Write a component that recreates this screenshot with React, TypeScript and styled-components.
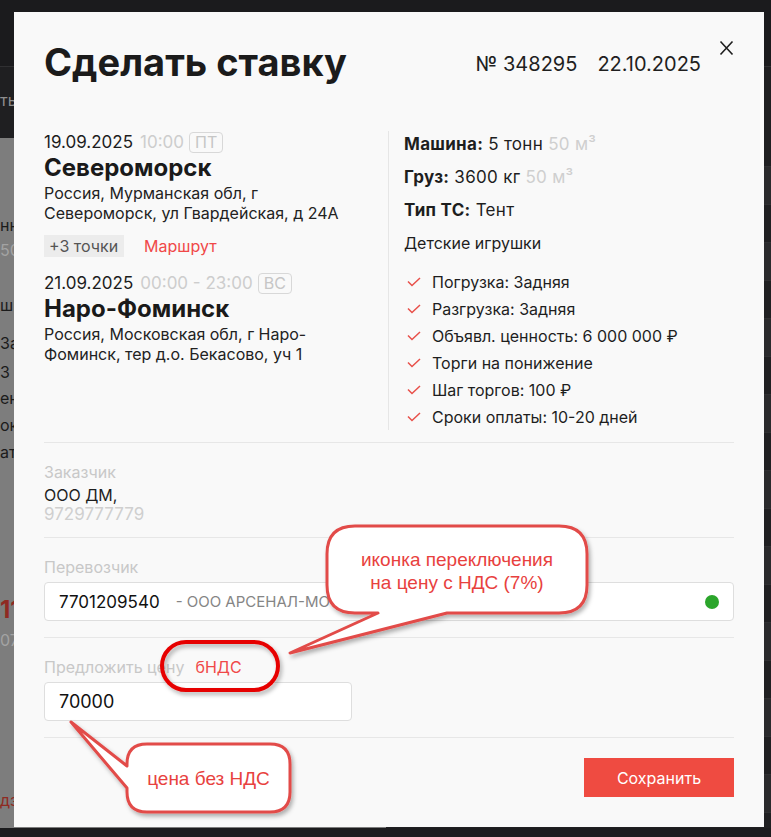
import React from 'react';
import styled, { createGlobalStyle } from 'styled-components';

const GlobalStyle = createGlobalStyle`
  html, body { margin: 0; padding: 0; }
  body {
    background: #1c1c1e;
    font-family: Inter, "Noto Sans", sans-serif;
    color: #1d1d1d;
  }
  *, *::before, *::after { box-sizing: border-box; }
`;

/* ---------- page under the overlay ---------- */

const Page = styled.div`
  width: 771px;
  height: 837px;
  display: flex;
  flex-direction: column;
  overflow: hidden;
`;

const NavBar = styled.div`
  flex-shrink: 0;
  height: 67px;
  background: #1b1b1d;
  border-bottom: 1px solid #303032;
`;

const SubBar = styled.div`
  flex-shrink: 0;
  height: 71px;
  background: #1f1f21;
  padding-top: 23px;
  font-size: 16px;
  line-height: 20px;
  color: #8e8e8e;
  white-space: nowrap;
`;

const PageBody = styled.div`
  flex: 1;
  min-height: 0;
  overflow: hidden;
  display: grid;
  grid-template-columns: 1fr 1fr;
`;

const LeftPane = styled.div`
  background: #7d7d7d;
  display: flex;
  flex-direction: column;
  white-space: nowrap;
  overflow: hidden;
`;

const BgLine = styled.div<{ $gap: number; $tone?: 'dark' | 'muted' | 'red'; $big?: boolean }>`
  flex-shrink: 0;
  margin-top: ${p => p.$gap}px;
  line-height: ${p => (p.$big ? 28 : 20)}px;
  font-size: ${p => (p.$big ? 24 : 16)}px;
  font-weight: ${p => (p.$big ? 700 : 400)};
  color: ${p => (p.$tone === 'muted' ? '#a3a3a3' : p.$tone === 'red' ? '#8f2a22' : '#1b1b1b')};
`;

const RightPane = styled.div`
  background: #1f1f21;
  padding-top: 28px;
  display: flex;
  flex-direction: column;
  overflow: hidden;
`;

const TableRow = styled.div<{ $alt: boolean }>`
  height: 38px;
  flex-shrink: 0;
  background: ${p => (p.$alt ? '#2a2a2c' : '#202022')};
  border-top: 1px solid #303032;
`;

const BottomBar = styled.div`
  flex-shrink: 0;
  height: 9px;
  background: #1c1c1e;
`;

/* ---------- modal ---------- */

const Backdrop = styled.div`
  position: fixed;
  inset: 0;
  padding: 12px 0 0 14px;
`;

const Modal = styled.div`
  width: 750px;
  background: #f9f9f9;
  padding: 30px;
`;

const Header = styled.div`
  display: flex;
  align-items: center;
  margin-bottom: 49px;
`;

const Title = styled.h1`
  margin: 0;
  font-size: 38px;
  line-height: 40px;
  font-weight: 700;
  color: #1b1b1b;
`;

const Meta = styled.div`
  margin-left: auto;
  margin-top: 4px;
  display: flex;
  gap: 20px;
  font-size: 20px;
  color: #1f1f1f;
`;

const CloseButton = styled.button`
  align-self: flex-start;
  margin: -2px 0 0 18px;
  width: 15px;
  height: 16px;
  padding: 0;
  border: 0;
  background: none;
  display: flex;
`;

const Info = styled.div`
  display: grid;
  grid-template-columns: 345px 1fr;
  margin-bottom: 12px;
`;

const Route = styled.div`
  border-right: 1px solid #e6e6e6;
  padding-right: 36px;
`;

const DateRow = styled.div`
  display: flex;
  align-items: center;
  height: 22px;
  font-size: 17px;
`;

const Time = styled.span`
  color: #cdcdcd;
  margin-left: 7px;
`;

const DayTag = styled.span`
  margin-left: 5px;
  border: 1px solid #d8d8d8;
  border-radius: 4px;
  height: 21px;
  padding: 0 5px;
  font-size: 16px;
  line-height: 19px;
  color: #c6c6c6;
`;

const City = styled.div`
  font-size: 24px;
  font-weight: 700;
  line-height: 30px;
  color: #1a1a1a;
`;

const Address = styled.div`
  font-size: 16px;
  line-height: 20px;
  color: #222;
`;

const Extra = styled.div`
  display: flex;
  align-items: center;
  margin: 12px 0 15px;
`;

const PointsTag = styled.span`
  background: #ececec;
  height: 22px;
  line-height: 22px;
  padding: 0 6px 0 5px;
  font-size: 16px;
  color: #555;
`;

const RouteLink = styled.a`
  margin-left: 20px;
  color: #f04848;
  font-size: 16px;
  text-decoration: none;
`;

const Details = styled.div`
  padding: 2px 0 0 15px;
`;

const Spec = styled.div<{ $plain?: boolean }>`
  font-size: ${p => (p.$plain ? 16 : 17)}px;
  line-height: 22px;
  margin-bottom: 11px;
  color: #1e1e1e;
  letter-spacing: ${p => (p.$plain ? 0 : 0.3)}px;

  b {
    font-weight: 700;
  }
`;

const Muted = styled.span`
  color: #cfcfcf;
`;

const Checks = styled.ul`
  list-style: none;
  margin: 14px 0 0;
  padding: 0;
`;

const Check = styled.li`
  display: flex;
  align-items: center;
  height: 27px;
  font-size: 16px;
  color: #1e1e1e;

  svg {
    margin: 0 11px 0 3px;
    flex-shrink: 0;
  }
`;

const Section = styled.div<{ $bottom?: number }>`
  border-top: 1px solid #e7e7e7;
  padding: 19px 0 ${p => p.$bottom ?? 16}px;
`;

const Label = styled.div`
  display: flex;
  gap: 11px;
  font-size: 16px;
  line-height: 20px;
  color: #c8c8c8;
`;

const VatToggle = styled.span`
  color: #f04848;
`;

const Customer = styled.div`
  margin-top: 4px;
  font-size: 16px;
  line-height: 19px;
  color: #1e1e1e;
`;

const CustomerPhone = styled.div`
  font-size: 17px;
  line-height: 19px;
  color: #cfcfcf;
`;

const Field = styled.div`
  margin-top: 5px;
  display: flex;
  align-items: center;
  height: 39px;
  background: #fff;
  border: 1px solid #dedede;
  border-radius: 4px;
  padding: 0 14px;
  font-size: 17px;
  white-space: nowrap;
`;

const Inn = styled.span`
  color: #111;
`;

const CarrierName = styled.span`
  margin-left: 16px;
  font-size: 15px;
  color: #858585;
`;

const StatusDot = styled.span`
  margin-left: auto;
  width: 14px;
  height: 14px;
  border-radius: 50%;
  background: #2ba52b;
`;

const PriceInput = styled.input`
  display: block;
  margin-top: 5px;
  width: 308px;
  height: 39px;
  background: #fff;
  border: 1px solid #dedede;
  border-radius: 4px;
  padding: 0 14px;
  font-family: Inter, "Noto Sans", sans-serif;
  font-size: 18px;
  color: #111;
  outline: none;
`;

const Footer = styled.div`
  border-top: 1px solid #e7e7e7;
  padding-top: 20px;
  display: flex;
  justify-content: flex-end;
`;

const SaveButton = styled.button`
  width: 150px;
  height: 39px;
  border: 0;
  background: #ef4b41;
  color: #fff;
  font-family: Inter, "Noto Sans", sans-serif;
  font-size: 16px;
`;

/* ---------- annotation callouts drawn over the screenshot ---------- */

const Notes = styled.div`
  position: fixed;
  inset: 0;
  pointer-events: none;
`;

const NoteShapes = styled.svg`
  position: absolute;
  left: 0;
  top: 0;
`;

const NoteText = styled.div<{ $x: number; $y: number; $w: number; $h: number }>`
  position: absolute;
  left: ${p => p.$x}px;
  top: ${p => p.$y}px;
  width: ${p => p.$w}px;
  height: ${p => p.$h}px;
  display: flex;
  align-items: center;
  justify-content: center;
  text-align: center;
  font-family: "Liberation Sans", Arial, sans-serif;
  font-size: 19px;
  line-height: 23px;
  color: #e8413e;
`;

const CheckIcon = () => (
  <svg width="14" height="10" viewBox="0 0 14 10">
    <polyline points="1,4.5 5,8.5 13,1" fill="none" stroke="#e8504a" strokeWidth="1.5" />
  </svg>
);

const checks = [
  'Погрузка: Задняя',
  'Разгрузка: Задняя',
  'Объявл. ценность: 6 000 000 ₽',
  'Торги на понижение',
  'Шаг торгов: 100 ₽',
  'Сроки оплаты: 10-20 дней',
];

// fragments of the list page that peek out to the left of the modal
const bgLines: { gap: number; text: string; tone?: 'dark' | 'muted' | 'red'; big?: boolean }[] = [
  { gap: 77, text: 'нн' },
  { gap: 5, text: '50', tone: 'muted' },
  { gap: 35, text: 'шк' },
  { gap: 18, text: 'За' },
  { gap: 9, text: 'З' },
  { gap: 6, text: 'ен' },
  { gap: 7, text: 'ок' },
  { gap: 7, text: 'ат' },
  { gap: 134, text: '11', tone: 'red', big: true },
  { gap: 6, text: '07', tone: 'muted' },
  { gap: 140, text: 'дз', tone: 'red' },
];

const bubbleTop =
  'M355 526 H559 Q587 526 587 554 V585 Q587 613 559 613 H447 L290 653 L378 613 H355 Q327 613 327 585 V554 Q327 526 355 526 Z';
const bubbleBottom =
  'M147 744 H270 Q290 744 290 764 V792 Q290 812 270 812 H147 Q127 812 127 792 V788 L71 722 L127 766 V764 Q127 744 147 744 Z';

export default function App() {
  return (
    <>
      <GlobalStyle />
      <Page>
        <NavBar />
        <SubBar>ть</SubBar>
        <PageBody>
          <LeftPane>
            {bgLines.map((l, i) => (
              <BgLine key={i} $gap={l.gap} $tone={l.tone} $big={l.big}>
                {l.text}
              </BgLine>
            ))}
          </LeftPane>
          <RightPane>
            {Array.from({ length: 18 }).map((_, i) => (
              <TableRow key={i} $alt={i % 2 === 0} />
            ))}
          </RightPane>
        </PageBody>
        <BottomBar />
      </Page>

      <Backdrop>
        <Modal>
          <Header>
            <Title>Сделать ставку</Title>
            <Meta>
              <span>№ 348295</span>
              <span>22.10.2025</span>
            </Meta>
            <CloseButton aria-label="Закрыть">
              <svg width="15" height="16" viewBox="0 0 15 16">
                <path d="M1.5 1.5 L13.5 14.5 M13.5 1.5 L1.5 14.5" stroke="#1e1e1e" strokeWidth="1.6" />
              </svg>
            </CloseButton>
          </Header>

          <Info>
            <Route>
              <DateRow>
                19.09.2025<Time>10:00</Time>
                <DayTag>ПТ</DayTag>
              </DateRow>
              <City>Североморск</City>
              <Address>Россия, Мурманская обл, г Североморск, ул Гвардейская, д 24А</Address>
              <Extra>
                <PointsTag>+3 точки</PointsTag>
                <RouteLink href="#">Маршрут</RouteLink>
              </Extra>
              <DateRow>
                21.09.2025<Time>00:00 - 23:00</Time>
                <DayTag>ВС</DayTag>
              </DateRow>
              <City>Наро-Фоминск</City>
              <Address>Россия, Московская обл, г Наро-Фоминск, тер д.о. Бекасово, уч 1</Address>
            </Route>

            <Details>
              <Spec>
                <b>Машина:</b> 5 тонн <Muted>50 м³</Muted>
              </Spec>
              <Spec>
                <b>Груз:</b> 3600 кг <Muted>50 м³</Muted>
              </Spec>
              <Spec>
                <b>Тип ТС:</b> Тент
              </Spec>
              <Spec $plain>Детские игрушки</Spec>
              <Checks>
                {checks.map(c => (
                  <Check key={c}>
                    <CheckIcon />
                    {c}
                  </Check>
                ))}
              </Checks>
            </Details>
          </Info>

          <Section $bottom={13}>
            <Label>Заказчик</Label>
            <Customer>ООО ДМ,</Customer>
            <CustomerPhone>9729777779</CustomerPhone>
          </Section>

          <Section>
            <Label>Перевозчик</Label>
            <Field>
              <Inn>7701209540</Inn>
              <CarrierName>- ООО АРСЕНАЛ-МОСКВА</CarrierName>
              <StatusDot />
            </Field>
          </Section>

          <Section>
            <Label>
              Предложить цену <VatToggle>бНДС</VatToggle>
            </Label>
            <PriceInput defaultValue="70000" readOnly />
          </Section>

          <Footer>
            <SaveButton>Сохранить</SaveButton>
          </Footer>
        </Modal>
      </Backdrop>

      <Notes>
        <NoteShapes width="771" height="837" viewBox="0 0 771 837">
          <defs>
            <filter id="noteShadow" x="-20%" y="-20%" width="140%" height="150%">
              <feDropShadow dx="2" dy="3" stdDeviation="2" floodColor="#000" floodOpacity="0.3" />
            </filter>
          </defs>
          <path d={bubbleTop} fill="#fff" stroke="#e24b48" strokeWidth="3" strokeLinejoin="round" filter="url(#noteShadow)" />
          <rect x="162" y="642" width="116" height="48" rx="24" fill="none" stroke="#e60000" strokeWidth="4" filter="url(#noteShadow)" />
          <path d={bubbleBottom} fill="#fff" stroke="#e24b48" strokeWidth="3" strokeLinejoin="round" filter="url(#noteShadow)" />
        </NoteShapes>
        <NoteText $x={327} $y={526} $w={260} $h={90}>
          иконка переключения
          <br />
          на цену с НДС (7%)
        </NoteText>
        <NoteText $x={127} $y={744} $w={163} $h={68}>
          цена без НДС
        </NoteText>
      </Notes>
    </>
  );
}
